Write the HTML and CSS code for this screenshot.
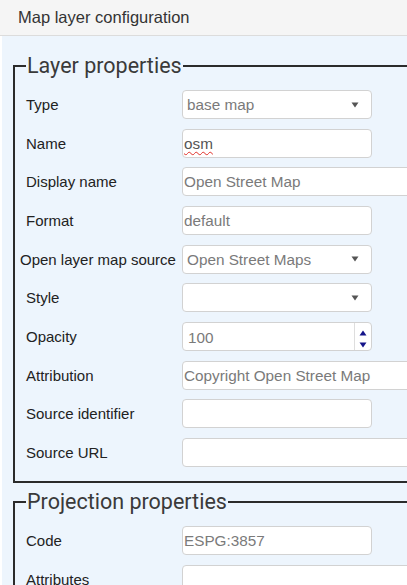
FILE: index.html
```html
<!DOCTYPE html>
<html>
<head>
<meta charset="utf-8">
<link rel="stylesheet" href="styles.css">
</head>
<body>
<div class="header">Map layer configuration</div>
<div class="panel">
  <fieldset class="group first">
    <legend>Layer properties</legend>
    <div class="form">
      <label class="lbl">Type</label>
      <div class="field select"><span>base map</span><svg class="arrow" width="8" height="6" viewBox="0 0 8 6"><path d="M0.5 0.5H7.5L4 5.5Z"/></svg></div>
      <label class="lbl">Name</label>
      <div class="field text dark"><span class="spell">osm</span></div>
      <label class="lbl">Display name</label>
      <div class="field text wide"><span>Open Street Map</span></div>
      <label class="lbl">Format</label>
      <div class="field text"><span>default</span></div>
      <label class="lbl long">Open layer map source</label>
      <div class="field select"><span>Open Street Maps</span><svg class="arrow" width="8" height="6" viewBox="0 0 8 6"><path d="M0.5 0.5H7.5L4 5.5Z"/></svg></div>
      <label class="lbl">Style</label>
      <div class="field select"><span></span><svg class="arrow" width="8" height="6" viewBox="0 0 8 6"><path d="M0.5 0.5H7.5L4 5.5Z"/></svg></div>
      <label class="lbl">Opacity</label>
      <div class="field num"><span class="numval">100</span><div class="spin"><svg width="16" height="27" viewBox="0 0 16 27"><path class="up" d="M4.5 12.5H11.5L8 7.5Z"/><path class="down" d="M4.5 19.5H11.5L8 24.5Z"/></svg></div></div>
      <label class="lbl">Attribution</label>
      <div class="field text wide"><span>Copyright Open Street Map</span></div>
      <label class="lbl">Source identifier</label>
      <div class="field text"><span></span></div>
      <label class="lbl">Source URL</label>
      <div class="field text wide"><span></span></div>
    </div>
  </fieldset>
  <fieldset class="group second">
    <legend>Projection properties</legend>
    <div class="form">
      <label class="lbl">Code</label>
      <div class="field text"><span>ESPG:3857</span></div>
      <label class="lbl">Attributes</label>
      <div class="field text wide"><span></span></div>
    </div>
  </fieldset>
</div>
</body>
</html>
```
FILE: styles.css
```css
html, body {
  margin: 0;
  padding: 0;
  width: 407px;
  height: 585px;
  overflow: hidden;
}
body {
  background: #ffffff;
  font-family: "Liberation Sans", Arial, sans-serif;
  color: #222;
}
.header {
  height: 35px;
  line-height: 35px;
  background: #f5f5f5;
  border-bottom: 1px solid #dcdcdc;
  padding-left: 18px;
  font-size: 16.5px;
  color: #333;
}
.panel {
  margin-left: 2px;
  width: 480px;
  height: 549px;
  box-sizing: border-box;
  padding-top: 17px;
  background: #edf5fd;
  overflow: hidden;
}
.group {
  margin: 0 0 0 11px;
  border: 2px solid #2b2b2b;
  border-right: none;
  padding: 11px 0 14px 11px;
  min-width: 0;
}
.second {
  margin-top: 6px;
}
legend {
  font-family: Roboto, "Liberation Sans", sans-serif;
  font-size: 21.5px;
  line-height: 26px;
  padding: 0 1px;
  color: #3a3a3a;
}
.form {
  display: grid;
  grid-template-columns: 156px auto;
  grid-auto-rows: 29px;
  row-gap: 9.67px;
  align-items: center;
}
.lbl {
  font-size: 15px;
  color: #222;
  white-space: nowrap;
}
.lbl.long {
  margin-left: -6px;
}
.field {
  box-sizing: border-box;
  height: 29px;
  width: 190px;
  border: 1px solid #d2d2d2;
  border-radius: 4px;
  background: #fff;
  display: flex;
  align-items: center;
  font-size: 15.3px;
  color: #7a7a7a;
  white-space: nowrap;
  overflow: hidden;
}
.field span {
  padding-top: 1px;
}
.field.wide {
  width: 260px;
}
.text {
  padding-left: 1px;
}
.dark {
  color: #555;
}
.spell {
  text-decoration: underline wavy #e0302a;
  text-decoration-thickness: 1px;
  text-underline-offset: 2px;
}
.select {
  padding-left: 4px;
  padding-right: 12px;
  justify-content: space-between;
}
.arrow path {
  fill: #555;
}
.num {
  padding-left: 5px;
  justify-content: space-between;
}
.field .numval {
  padding-top: 3px;
}
.spin {
  height: 100%;
  width: 17px;
  border-left: 1px solid #dedede;
  box-sizing: border-box;
}
.spin svg {
  display: block;
}
.spin path {
  fill: #14148a;
}
```
